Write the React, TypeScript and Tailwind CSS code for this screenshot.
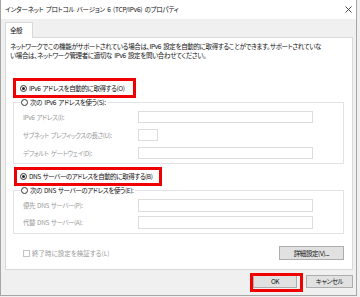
import React from "react";

const font = { fontFamily: '"Noto Sans CJK JP", "Noto Sans", sans-serif' };

function Radio({ checked }: { checked?: boolean }) {
  return (
    <span className="flex h-[7px] w-[7px] shrink-0 items-center justify-center rounded-full border border-[#333] bg-white">
      {checked && <span className="h-[3px] w-[3px] rounded-full bg-[#222]" />}
    </span>
  );
}

function FieldRow({ label, inputW, h, track }: { label: string; inputW: string; h: string; track?: string }) {
  return (
    <div className={`flex items-center ${h}`}>
      <span className={`w-[115px] whitespace-nowrap text-[#9a9a9a] ${track ?? ""}`}>{label}</span>
      <span className={`${inputW} h-full border border-[#dcdcdc] bg-white`} />
    </div>
  );
}

export default function App() {
  return (
    <div
      className="h-[297px] w-[360px] overflow-hidden bg-[#f0f0f0] text-[6.5px] leading-[9px] tracking-[-0.4px] text-[#111] [font-feature-settings:'palt'] [word-spacing:1px]"
      style={font}
    >
      <div className="flex h-[296px] w-[357px] flex-col border-b border-l border-r border-[#a6a6a6] bg-[#f0f0f0]">
        {/* title bar */}
        <div className="flex h-[19px] shrink-0 items-center justify-between bg-white pl-[4px] pr-[3px]">
          <span className="whitespace-nowrap tracking-[-0.2px]">インターネット プロトコル バージョン 6 (TCP/IPv6) のプロパティ</span>
          <svg width="7" height="7" viewBox="0 0 7 7" className="mr-[1px]">
            <path d="M0.5 0.5 L6.5 6.5 M6.5 0.5 L0.5 6.5" stroke="#333" strokeWidth="0.9" />
          </svg>
        </div>

        {/* body */}
        <div className="flex flex-col pl-[4px] pr-[3px] pt-[3px]">
          {/* tabs */}
          <div className="flex">
            <div className="relative z-10 -mb-px flex h-[16px] w-[28px] items-center border border-b-0 border-[#d9d9d9] bg-white pl-[4px]">
              全般
            </div>
          </div>

          {/* panel */}
          <div className="flex flex-col border border-[#d9d9d9] bg-white pb-[9px] pl-[4px] pr-[8px] pt-[4px]">
            <p className="whitespace-nowrap tracking-[-0.35px]">
              ネットワークでこの機能がサポートされている場合は、IPv6 設定を自動的に取得することができます。サポートされていな
              <br />
              い場合は、ネットワーク管理者に適切な IPv6 設定を問い合わせてください。
            </p>

            {/* radio 1 */}
            <div className="relative ml-[10px] mt-[22px] flex h-[12px] items-center gap-[2px]">
              <span className="pointer-events-none absolute left-[-7px] top-[-4px] h-[20px] w-[123px] border-[3px] border-[#f00000]" />
              <Radio checked />
              <span className="whitespace-nowrap">IPv6 アドレスを自動的に取得する(O)</span>
            </div>

            {/* group 1 */}
            <fieldset className="ml-[3px] mt-[2px] border border-[#e3e3e3] pb-[4px] pl-[9px] pr-[7px] pt-[3px]">
              <legend className="-ml-[2px] flex h-[12px] items-center gap-[2px] bg-white pr-[1px]">
                <Radio />
                <span className="whitespace-nowrap tracking-[-0.3px]">次の IPv6 アドレスを使う(S):</span>
              </legend>
              <div className="flex flex-col gap-[6px]">
                <FieldRow label="IPv6 アドレス(I):" inputW="w-[175px]" h="h-[12px]" />
                <FieldRow label="サブネット プレフィックスの長さ(U):" inputW="w-[20px]" h="h-[12px]" track="tracking-[-0.5px]" />
                <FieldRow label="デフォルト ゲートウェイ(D):" inputW="w-[175px]" h="h-[12px]" />
              </div>
            </fieldset>

            {/* radio 3 */}
            <div className="relative ml-[10px] mt-[6px] flex h-[12px] items-center gap-[2px]">
              <span className="pointer-events-none absolute left-[-6px] top-[-3px] h-[19px] w-[148px] border-[3px] border-[#f00000]" />
              <Radio checked />
              <span className="whitespace-nowrap tracking-[-0.45px]">DNS サーバーのアドレスを自動的に取得する(B)</span>
            </div>

            {/* group 2 */}
            <fieldset className="ml-[3px] mt-[2px] border border-[#e3e3e3] pb-[4px] pl-[9px] pr-[7px] pt-[3px]">
              <legend className="-ml-[2px] flex h-[12px] items-center gap-[2px] bg-white pr-[1px]">
                <Radio />
                <span className="whitespace-nowrap">次の DNS サーバーのアドレスを使う(E):</span>
              </legend>
              <div className="flex flex-col gap-[4px]">
                <FieldRow label="優先 DNS サーバー(P):" inputW="w-[175px]" h="h-[13px]" track="tracking-[-0.45px]" />
                <FieldRow label="代替 DNS サーバー(A):" inputW="w-[175px]" h="h-[13px]" track="tracking-[-0.45px]" />
              </div>
            </fieldset>

            {/* bottom row */}
            <div className="mt-[12px] flex items-center justify-between">
              <div className="ml-[13px] flex items-center gap-[2px] text-[#9a9a9a]">
                <span className="h-[7px] w-[7px] border border-[#c4c4c4] bg-white" />
                <span className="whitespace-nowrap tracking-normal">終了時に設定を検証する(L)</span>
              </div>
              <button className="flex h-[14px] w-[65px] items-center justify-center border border-[#adadad] bg-[#e1e1e1] text-[#111]">
                詳細設定(V)...
              </button>
            </div>
          </div>

          {/* buttons */}
          <div className="mt-[5px] flex justify-end gap-[9px]">
            <button className="relative flex h-[13px] w-[44px] items-center justify-center border border-[#adadad] bg-[#e1e1e1] text-[#111]">
              <span className="pointer-events-none absolute left-[-4px] top-[-3px] h-[19px] w-[53px] border-[3px] border-[#f00000]" />
              OK
            </button>
            <button className="flex h-[13px] w-[47px] items-center justify-center border border-[#adadad] bg-[#e1e1e1] text-[#111]">
              キャンセル
            </button>
          </div>
        </div>
      </div>
    </div>
  );
}
